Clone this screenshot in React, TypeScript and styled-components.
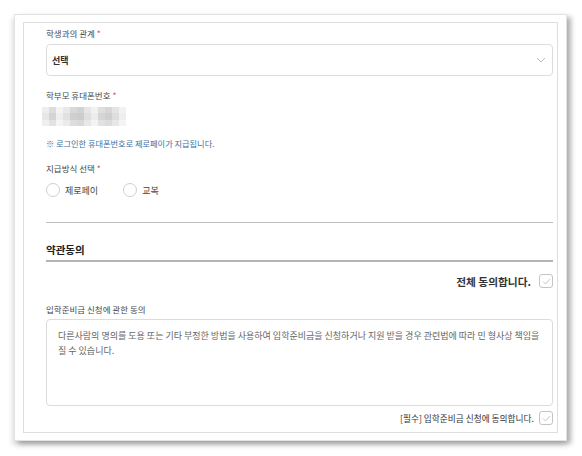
import styled, { createGlobalStyle } from "styled-components";

const GlobalStyle = createGlobalStyle`
  html, body {
    margin: 0;
    background: #ffffff;
  }
  body {
    font-family: "Noto Sans CJK KR", "Noto Sans", sans-serif;
    color: #444;
  }
`;

const Page = styled.div`
  width: 582px;
  height: 456px;
  padding: 14px 0 0 14px;
  box-sizing: border-box;
`;

const Frame = styled.div`
  width: 553px;
  height: 427px;
  box-sizing: border-box;
  padding: 7px 8px 7px 8px;
  border: 1px solid #e2e2e2;
  background: #fff;
  box-shadow: 4px 3px 5px rgba(0, 0, 0, 0.3), -2px 4px 5px rgba(0, 0, 0, 0.12);
`;

const Panel = styled.div`
  height: 100%;
  box-sizing: border-box;
  border: 1px solid #dedede;
  padding: 3px 4px 0 22px;
  display: flex;
  flex-direction: column;
`;

const Label = styled.div<{ $top?: number }>`
  margin-top: ${({ $top }) => $top ?? 0}px;
  font-size: 8.5px;
  line-height: 14px;
  height: 14px;
  color: #484848;
  white-space: nowrap;
`;

const Star = styled.span`
  color: #e2504c;
  margin-left: 2px;
`;

const Select = styled.div`
  margin-top: 4px;
  height: 32px;
  box-sizing: border-box;
  border: 1px solid #dcdcdc;
  border-radius: 4px;
  display: flex;
  align-items: center;
  justify-content: space-between;
  padding: 0 6px 0 5px;
  font-size: 9px;
  font-weight: 700;
  color: #333;
`;

const Mosaic = styled.div`
  margin: 5px 0 0 -4px;
  display: grid;
  grid-template-columns: repeat(12, 7px);
  grid-template-rows: 6px 7px 6px;
  width: 84px;
`;

const Notice = styled.div`
  margin-top: 10px;
  font-size: 8.2px;
  line-height: 14px;
  height: 14px;
  color: #3c6e9e;
  white-space: nowrap;
`;

const RadioRow = styled.div`
  margin-top: 7px;
  height: 16px;
  display: flex;
  align-items: center;
  gap: 25px;
`;

const RadioItem = styled.label`
  display: flex;
  align-items: center;
  gap: 5px;
  font-size: 9px;
  color: #444;
`;

const Circle = styled.span`
  width: 14px;
  height: 14px;
  box-sizing: border-box;
  border: 1px solid #cfcfcf;
  border-radius: 50%;
`;

const Divider = styled.hr`
  margin: 24px 0 0;
  border: none;
  border-top: 1px solid #bdbdbd;
`;

const Title = styled.div`
  margin-top: 19px;
  font-size: 10.5px;
  font-weight: 700;
  line-height: 16px;
  color: #222;
  padding-bottom: 2px;
  border-bottom: 2px solid #b4b4b4;
`;

const AgreeRow = styled.div<{ $top: number; $bold?: boolean }>`
  margin-top: ${({ $top }) => $top}px;
  height: 16px;
  display: flex;
  align-items: center;
  justify-content: flex-end;
  gap: ${({ $bold }) => ($bold ? "8px" : "5px")};
  font-size: ${({ $bold }) => ($bold ? "10.7px" : "8.7px")};
  font-weight: ${({ $bold }) => ($bold ? 700 : 400)};
  color: #333;
`;

const CheckBox = styled.span`
  width: 14px;
  height: 14px;
  box-sizing: border-box;
  border: 1px solid #c4c4c4;
  border-radius: 3px;
  display: flex;
  align-items: center;
  justify-content: center;
`;

const TermsBox = styled.div`
  margin-top: 3px;
  height: 87px;
  box-sizing: border-box;
  border: 1px solid #dcdcdc;
  border-radius: 4px;
  padding: 8px 4px 0 11px;
  font-size: 9px;
  line-height: 15px;
  color: #666;
`;

const shades = [
  ["#eeeeee", "#dddddd", "#f3f3f3", "#e9e9e9", "#d8d8d8", "#d2d2d2", "#e6e6e6", "#f1f1f1", "#dedede", "#d6d6d6", "#e4e4e4", "#f2f2f2"],
  ["#e7e7e7", "#d4d4d4", "#eeeeee", "#e1e1e1", "#cfcfcf", "#cccccc", "#dfdfdf", "#ececec", "#d5d5d5", "#cfcfcf", "#dddddd", "#eeeeee"],
  ["#efefef", "#e2e2e2", "#f4f4f4", "#ebebeb", "#dddddd", "#d9d9d9", "#e8e8e8", "#f3f3f3", "#e2e2e2", "#dcdcdc", "#e7e7e7", "#f4f4f4"],
];

const Check = () => (
  <svg width="9" height="7" viewBox="0 0 9 7">
    <polyline points="1,3.5 3.5,6 8,1" fill="none" stroke="#c8c8c8" strokeWidth="1" />
  </svg>
);

export default function App() {
  return (
    <Page>
      <GlobalStyle />
      <Frame>
        <Panel>
          <Label>
            학생과의 관계<Star>*</Star>
          </Label>
          <Select>
            선택
            <svg width="10" height="6" viewBox="0 0 10 6">
              <polyline points="1,1 5,5 9,1" fill="none" stroke="#bbbbbb" strokeWidth="1" />
            </svg>
          </Select>
          <Label $top={12}>
            학부모 휴대폰번호<Star>*</Star>
          </Label>
          <Mosaic>
            {shades.flatMap((row, r) =>
              row.map((c, i) => <span key={`${r}-${i}`} style={{ background: c }} />)
            )}
          </Mosaic>
          <Notice>※ 로그인한 휴대폰번호로 제로페이가 지급됩니다.</Notice>
          <Label $top={11}>
            지급방식 선택<Star>*</Star>
          </Label>
          <RadioRow>
            <RadioItem>
              <Circle />
              제로페이
            </RadioItem>
            <RadioItem>
              <Circle />
              교복
            </RadioItem>
          </RadioRow>
          <Divider />
          <Title>약관동의</Title>
          <AgreeRow $top={11} $bold>
            전체 동의합니다.
            <CheckBox>
              <Check />
            </CheckBox>
          </AgreeRow>
          <Label $top={13}>입학준비금 신청에 관한 동의</Label>
          <TermsBox>
            다른사람의 명의를 도용 또는 기타 부정한 방법을 사용하여 입학준비금을 신청하거나 지원 받을 경우 관련법에 따라 민 형사상 책임을
            질 수 있습니다.
          </TermsBox>
          <AgreeRow $top={4}>
            [필수] 입학준비금 신청에 동의합니다.
            <CheckBox>
              <Check />
            </CheckBox>
          </AgreeRow>
        </Panel>
      </Frame>
    </Page>
  );
}
